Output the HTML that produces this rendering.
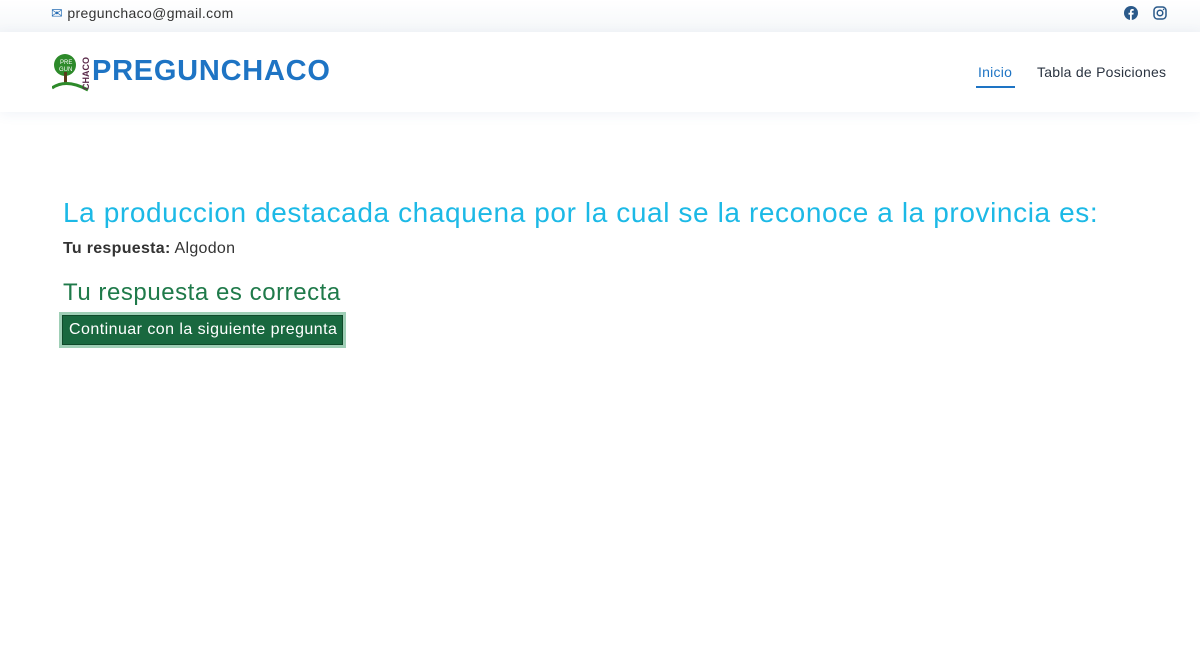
<!DOCTYPE html>
<html><head><meta charset="utf-8"><style>
*{margin:0;padding:0;box-sizing:border-box}
body{width:1200px;height:662px;background:#fff;font-family:"Liberation Sans",sans-serif;position:relative;overflow:hidden}
.top{position:absolute;left:0;top:0;width:1200px;height:32px;background:linear-gradient(#fff,#f5f7f9)}
.mail{position:absolute;left:51px;top:5px;font-size:14px;color:#333;letter-spacing:.35px}
.hdr{position:absolute;left:0;top:32px;width:1200px;height:80px;background:#fff;box-shadow:0 2px 12px rgba(60,100,160,.08)}
.brand{position:absolute;left:92px;top:55px;font-size:29px;font-weight:bold;color:#1e74c4;letter-spacing:.75px}
.nav{position:absolute;top:64px;font-size:14px;color:#2a3340;letter-spacing:.25px}
h1{position:absolute;left:63px;top:197px;font-size:28px;font-weight:normal;color:#1cb9e6;white-space:nowrap;letter-spacing:.6px}
.ans{position:absolute;left:63px;top:240px;font-size:16px;color:#333;letter-spacing:.3px}
h2{position:absolute;left:63px;top:279px;font-size:24px;font-weight:normal;color:#1f7a4a;letter-spacing:.55px}
.btn{position:absolute;left:59px;top:312px;width:287px;height:36px;background:#9fcfb6;padding:3px}
.btn div{background:#19683f;height:30px;border:1px solid #0f4a2a;color:#fff;font-size:16px;line-height:28px;padding-left:6px;white-space:nowrap;letter-spacing:.45px}
</style></head><body>
<div class="top"></div>
<div class="mail"><span style="color:#2a6fb5">✉</span> pregunchaco@gmail.com</div>
<svg style="position:absolute;left:1124px;top:6px" width="14" height="14" viewBox="0 0 14 14"><circle cx="7" cy="7" r="7" fill="#2b5a8a"/><path d="M7.8 14V8.6h1.6l.3-1.9H7.8V5.6c0-.5.2-.9.9-.9h1V3.1c-.3 0-.8-.1-1.4-.1-1.4 0-2.3.8-2.3 2.4v1.3H4.5v1.9H6V14z" fill="#fff"/></svg>
<svg style="position:absolute;left:1153px;top:6px" width="14" height="14" viewBox="0 0 14 14"><rect x="1" y="1" width="12" height="12" rx="3.5" fill="none" stroke="#2b5a8a" stroke-width="1.5"/><circle cx="7" cy="7" r="2.8" fill="none" stroke="#2b5a8a" stroke-width="1.5"/><circle cx="10.6" cy="3.4" r=".8" fill="#2b5a8a"/></svg>
<div class="hdr"></div>
<svg style="position:absolute;left:52px;top:52px" width="40" height="40" viewBox="0 0 40 40">
<circle cx="13" cy="13" r="11" fill="#2d8a2a"/><rect x="12" y="20" width="3" height="12" fill="#5a3a1a"/>
<path d="M0 36 Q14 26 36 38" stroke="#2d8a2a" stroke-width="3" fill="none"/>
<text x="8" y="12" font-size="6" fill="#fff" font-family="Liberation Sans">PRE</text>
<text x="7" y="19" font-size="6" fill="#fff" font-family="Liberation Sans">GUN</text>
<text transform="translate(37,38) rotate(-90)" font-size="9" font-weight="bold" fill="#5a2a4a" font-family="Liberation Sans">CHACO</text>
</svg>
<div class="brand">PREGUNCHACO</div>
<div class="nav" style="left:978px;color:#1e74c4">Inicio</div>
<div style="position:absolute;left:976px;top:86px;width:39px;height:2px;background:#1e74c4"></div>
<div class="nav" style="left:1037px">Tabla de Posiciones</div>
<h1>La produccion destacada chaquena por la cual se la reconoce a la provincia es:</h1>
<div class="ans"><b>Tu respuesta:</b> Algodon</div>
<h2>Tu respuesta es correcta</h2>
<div class="btn"><div>Continuar con la siguiente pregunta</div></div>
</body></html>
